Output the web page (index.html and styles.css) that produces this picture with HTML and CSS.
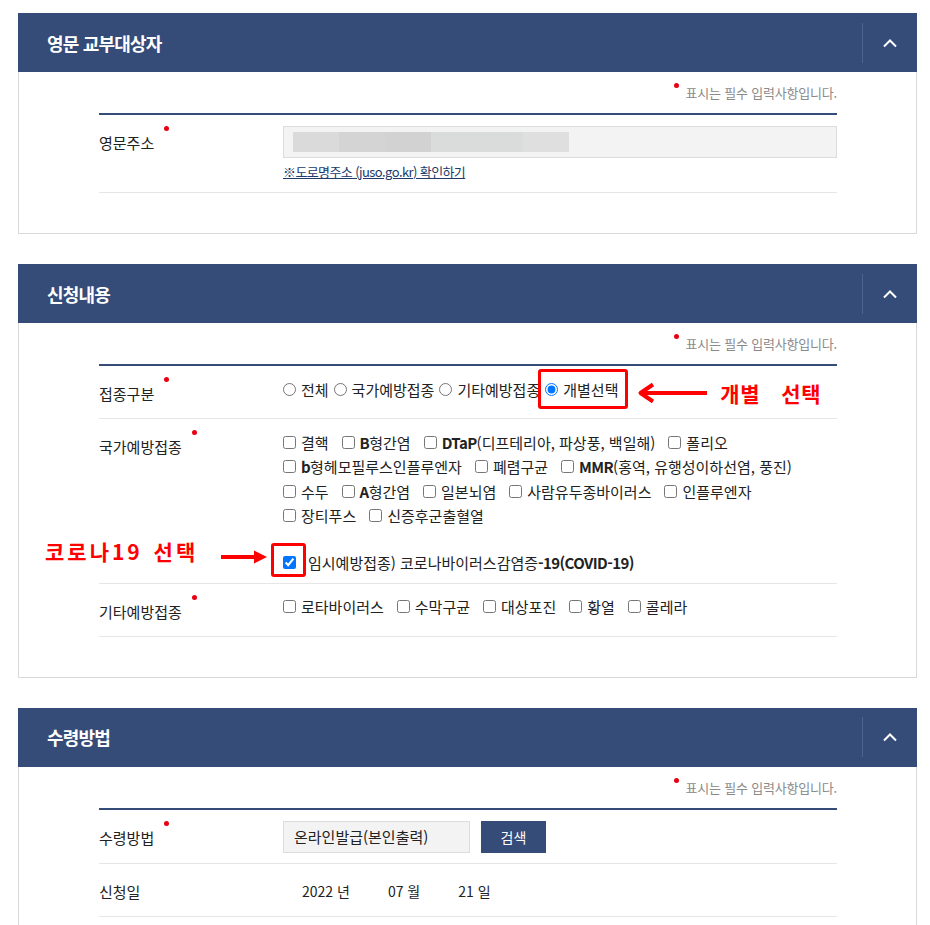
FILE: index.html
```html
<!DOCTYPE html>
<html lang="ko">
<head>
<meta charset="utf-8">
<title>증명서 신청</title>
<link rel="stylesheet" href="styles.css">
</head>
<body>
<div class="page">

  <section class="panel">
    <div class="panel-head">
      <h2 class="panel-title">영문 교부대상자</h2>
      <button class="toggle" type="button" aria-label="접기">
        <svg width="14" height="10" viewBox="0 0 14 10"><polyline points="1,8.5 7,2.5 13,8.5" fill="none" stroke="#fff" stroke-width="2"/></svg>
      </button>
    </div>
    <div class="panel-body">
      <p class="req-note"><span class="dot"></span>표시는 필수 입력사항입니다.</p>
      <div class="form">
        <div class="row">
          <div class="label"><span class="req">영문주소</span></div>
          <div class="value">
            <div class="field field-wide">
              <span class="blur">
                <span class="b1"></span><span class="b2"></span><span class="b3"></span><span class="b4"></span><span class="b5"></span>
              </span>
            </div>
            <a class="link" href="#">※도로명주소 (juso.go.kr) 확인하기</a>
          </div>
        </div>
      </div>
    </div>
  </section>

  <section class="panel">
    <div class="panel-head">
      <h2 class="panel-title">신청내용</h2>
      <button class="toggle" type="button" aria-label="접기">
        <svg width="14" height="10" viewBox="0 0 14 10"><polyline points="1,8.5 7,2.5 13,8.5" fill="none" stroke="#fff" stroke-width="2"/></svg>
      </button>
    </div>
    <div class="panel-body">
      <p class="req-note"><span class="dot"></span>표시는 필수 입력사항입니다.</p>
      <div class="form">
        <div class="row">
          <div class="label"><span class="req">접종구분</span></div>
          <div class="value">
            <div class="radios">
              <label class="opt"><input type="radio" name="kind">전체</label>
              <label class="opt"><input type="radio" name="kind">국가예방접종</label>
              <label class="opt"><input type="radio" name="kind">기타예방접종</label>
              <label class="opt marked"><input type="radio" name="kind" checked>개별선택
                <span class="mark-box mark-box-radio"></span>
                <span class="callout callout-radio">
                  <svg class="arrow-left" width="72" height="24" viewBox="0 0 72 24"><path d="M4 12 H70 M16 3.5 L3.5 12 L16 20.5" fill="none" stroke="#f00" stroke-width="4" stroke-linejoin="round"/></svg>
                  <span class="callout-text callout-text-a">개별 선택</span>
                </span>
              </label>
            </div>
          </div>
        </div>

        <div class="row row-tight">
          <div class="label"><span class="req">국가예방접종</span></div>
          <div class="value">
            <div class="opts-line">
              <label class="opt"><input type="checkbox">결핵</label>
              <label class="opt"><input type="checkbox"><span><b class="en">B</b>형간염</span></label>
              <label class="opt"><input type="checkbox"><span><b class="en">DTaP</b>(디프테리아, 파상풍, 백일해)</span></label>
              <label class="opt"><input type="checkbox">폴리오</label>
            </div>
            <div class="opts-line">
              <label class="opt"><input type="checkbox"><span><b class="en">b</b>형헤모필루스인플루엔자</span></label>
              <label class="opt"><input type="checkbox">폐렴구균</label>
              <label class="opt"><input type="checkbox"><span><b class="en">MMR</b>(홍역, 유행성이하선염, 풍진)</span></label>
            </div>
            <div class="opts-line">
              <label class="opt"><input type="checkbox">수두</label>
              <label class="opt"><input type="checkbox"><span><b class="en">A</b>형간염</span></label>
              <label class="opt"><input type="checkbox">일본뇌염</label>
              <label class="opt"><input type="checkbox">사람유두종바이러스</label>
              <label class="opt"><input type="checkbox">인플루엔자</label>
            </div>
            <div class="opts-line">
              <label class="opt"><input type="checkbox">장티푸스</label>
              <label class="opt"><input type="checkbox">신증후군출혈열</label>
            </div>
            <div class="covid">
              <label class="opt opt-covid"><input type="checkbox" checked><span>임시예방접종) 코로나바이러스감염증<b class="en">-19(COVID-19)</b></span>
                <span class="mark-box mark-box-check"></span>
                <svg class="arrow-right" width="46" height="16" viewBox="0 0 46 16"><path d="M0 8 H36" stroke="#f00" stroke-width="4"/><path d="M33 1.5 L46 8 L33 14.5 Z" fill="#f00"/></svg>
                <span class="callout-text callout-text-b">코로나19 선택</span>
              </label>
            </div>
          </div>
        </div>

        <div class="row">
          <div class="label"><span class="req">기타예방접종</span></div>
          <div class="value">
            <div class="opts-line">
              <label class="opt"><input type="checkbox">로타바이러스</label>
              <label class="opt"><input type="checkbox">수막구균</label>
              <label class="opt"><input type="checkbox">대상포진</label>
              <label class="opt"><input type="checkbox">황열</label>
              <label class="opt"><input type="checkbox">콜레라</label>
            </div>
          </div>
        </div>
      </div>
    </div>
  </section>

  <section class="panel">
    <div class="panel-head">
      <h2 class="panel-title">수령방법</h2>
      <button class="toggle" type="button" aria-label="접기">
        <svg width="14" height="10" viewBox="0 0 14 10"><polyline points="1,8.5 7,2.5 13,8.5" fill="none" stroke="#fff" stroke-width="2"/></svg>
      </button>
    </div>
    <div class="panel-body">
      <p class="req-note"><span class="dot"></span>표시는 필수 입력사항입니다.</p>
      <div class="form">
        <div class="row row-btn">
          <div class="label"><span class="req">수령방법</span></div>
          <div class="value">
            <div class="inline-field">
              <div class="field field-select">온라인발급(본인출력)</div>
              <button class="btn" type="button">검색</button>
            </div>
          </div>
        </div>
        <div class="row">
          <div class="label">신청일</div>
          <div class="value">
            <div class="dates">
              <span>2022 년</span>
              <span>07 월</span>
              <span>21 일</span>
            </div>
          </div>
        </div>
      </div>
    </div>
  </section>

</div>
</body>
</html>
```

FILE: styles.css
```css
* {
  box-sizing: border-box;
}

body {
  margin: 0;
  background: #fff;
  color: #222;
  font-family: "Noto Sans CJK KR", "Noto Sans", sans-serif;
}

.page {
  padding: 13px 13px 30px 18px;
}

.panel {
  margin-bottom: 30px;
}

.panel-head {
  display: flex;
  align-items: center;
  height: 59px;
  background: #354b78;
}

.panel-title {
  flex: 1;
  margin: 0;
  padding-left: 29px;
  color: #fff;
  font-size: 18px;
  font-weight: 700;
  letter-spacing: -0.8px;
  line-height: 24px;
}

.toggle {
  width: 55px;
  height: 40px;
  padding: 0;
  border: 0;
  border-left: 1px solid #4d6390;
  background: none;
  display: flex;
  align-items: center;
  justify-content: center;
}

.panel-body {
  border: 1px solid #d9d9d9;
  border-top: 0;
  padding: 12px 79px 40px 80px;
}

.req-note {
  margin: 0 0 11px;
  text-align: right;
  font-size: 13px;
  line-height: 18px;
  color: #8a8a8a;
  letter-spacing: -0.2px;
}

.req-note .dot {
  display: inline-block;
  width: 5px;
  height: 5px;
  margin: -1px 7px 0 0;
  border-radius: 50%;
  background: #e60012;
  vertical-align: top;
}

.form {
  border-top: 2px solid #354b78;
}

.row {
  display: grid;
  grid-template-columns: 184px 1fr;
  padding: 11px 0 12px;
  border-bottom: 1px solid #e6e6e6;
}

.row-tight {
  padding-bottom: 8px;
}

.row-btn {
  padding-bottom: 10px;
}

.label {
  padding-top: 4px;
  font-size: 15px;
  line-height: 25px;
  color: #222;
}

.req {
  position: relative;
}

.req::after {
  content: "";
  position: absolute;
  right: -15px;
  top: -6px;
  width: 5px;
  height: 5px;
  border-radius: 50%;
  background: #e60012;
}

.value {
  font-size: 15px;
  line-height: 25px;
  color: #222;
}

.field {
  height: 32px;
  display: flex;
  align-items: center;
  background: #f3f3f3;
  border: 1px solid #dcdcdc;
  padding: 0 9px;
}

.blur {
  display: flex;
  height: 20px;
}

.blur span {
  display: block;
  height: 20px;
}

.blur .b1 { width: 46px; background: #dadada; }
.blur .b2 { width: 46px; background: #d4d4d4; }
.blur .b3 { width: 46px; background: #d2d2d2; }
.blur .b4 { width: 92px; background: #dadbdb; }
.blur .b5 { width: 46px; background: #dfdfdf; }

.link {
  display: block;
  margin-top: 6px;
  font-size: 13px;
  line-height: 16px;
  letter-spacing: -0.6px;
  color: #213a6a;
  text-decoration: underline;
}

.radios {
  display: flex;
  gap: 5px;
}

.opts-line {
  display: flex;
  gap: 13px;
  height: 24.5px;
  align-items: center;
}

.opt {
  position: relative;
  display: inline-flex;
  align-items: center;
  gap: 5px;
  height: 25px;
  white-space: nowrap;
}

.opt input {
  margin: 0;
  width: 13px;
  height: 13px;
}

.en {
  font-weight: 700;
  letter-spacing: -0.6px;
}

.covid {
  display: flex;
  margin-top: 21.5px;
}

.opt-covid {
  gap: 12px;
}

.mark-box {
  position: absolute;
  border: 3px solid #f00;
  border-radius: 3px;
}

.mark-box-radio {
  left: -7px;
  top: -8px;
  width: 90px;
  height: 40px;
}

.mark-box-check {
  left: -12px;
  top: -7px;
  width: 35px;
  height: 34px;
}

.callout {
  position: absolute;
  display: flex;
  align-items: center;
  height: 24px;
}

.callout-radio {
  left: 92px;
  top: 4px;
}

.callout-text {
  color: #f00;
  font-size: 21px;
  font-weight: 700;
  line-height: 24px;
  white-space: nowrap;
}

.callout-text-a {
  margin-left: 11px;
  letter-spacing: 0.8px;
  word-spacing: 14px;
}

.arrow-right {
  position: absolute;
  left: -62px;
  top: -1px;
}

.callout-text-b {
  position: absolute;
  left: -238px;
  top: -11px;
  letter-spacing: 3px;
  word-spacing: 2px;
}

.inline-field {
  display: flex;
  gap: 11px;
}

.field-select {
  width: 187px;
  padding: 0 10px;
}

.btn {
  width: 65px;
  height: 32px;
  border: 0;
  background: #354b78;
  color: #fff;
  font-family: inherit;
  font-size: 14px;
}

.dates {
  display: flex;
  gap: 38px;
  padding: 4px 0 0 19px;
  font-size: 14px;
}
```
